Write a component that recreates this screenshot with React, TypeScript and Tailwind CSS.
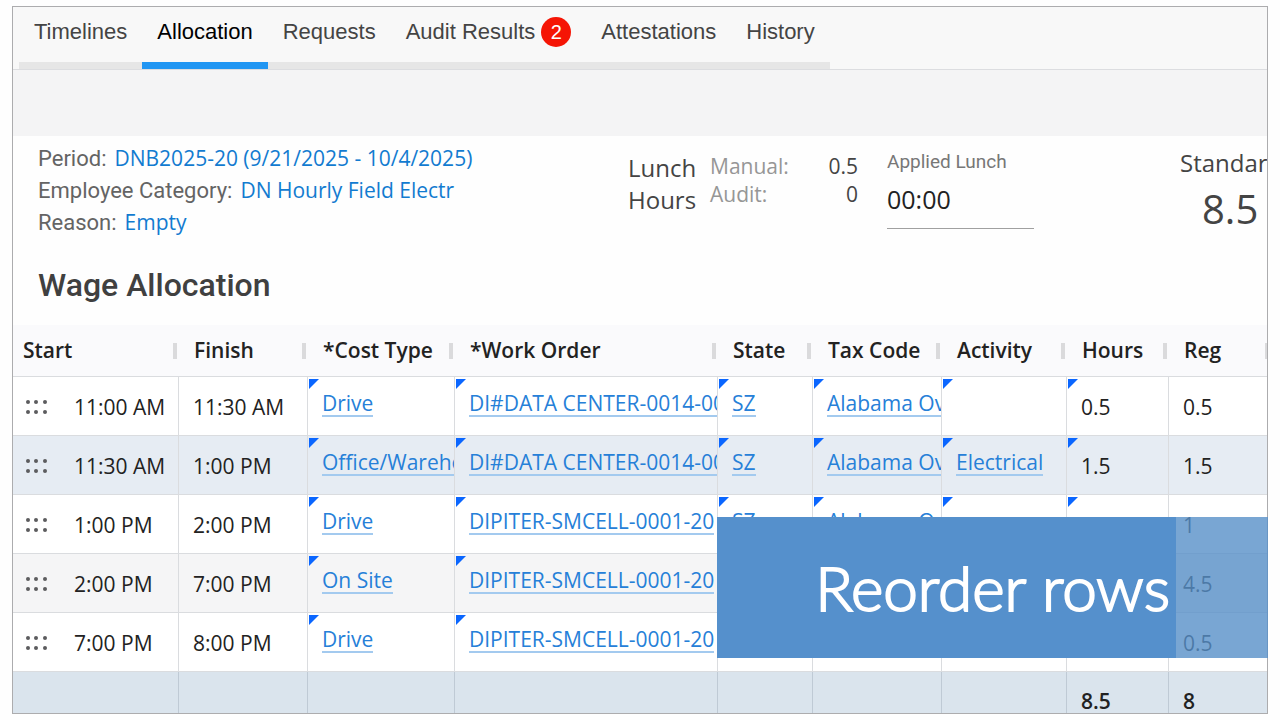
import { ReactNode } from 'react';
import { clsx } from 'clsx';

type Row = {
  start: string,
  finish: string,
  costType: string,
  workOrder: string,
  state: string,
  taxCode: string,
  activity: string,
  hours: string,
  reg: string,
  bg: string
}

const tabs = [
  { name: 'Timelines' },
  { name: 'Allocation', active: true },
  { name: 'Requests' },
  { name: 'Audit Results', count: 2 },
  { name: 'Attestations' },
  { name: 'History' },
];

const columns = [
  { name: 'Start', width: 'w-[166px]' },
  { name: 'Finish', width: 'w-[129px]' },
  { name: '*Cost Type', width: 'w-[147px]' },
  { name: '*Work Order', width: 'w-[263px]' },
  { name: 'State', width: 'w-[95px]' },
  { name: 'Tax Code', width: 'w-[129px]' },
  { name: 'Activity', width: 'w-[125px]' },
  { name: 'Hours', width: 'w-[102px]' },
  { name: 'Reg', width: '' },
];

const rows: Row[] = [
  { start: '11:00 AM', finish: '11:30 AM', costType: 'Drive', workOrder: 'DI#DATA CENTER-0014-001', state: 'SZ', taxCode: 'Alabama Overtime', activity: '', hours: '0.5', reg: '0.5', bg: 'bg-white' },
  { start: '11:30 AM', finish: '1:00 PM', costType: 'Office/Warehouse', workOrder: 'DI#DATA CENTER-0014-001', state: 'SZ', taxCode: 'Alabama Overtime', activity: 'Electrical', hours: '1.5', reg: '1.5', bg: 'bg-[#e6ecf3]' },
  { start: '1:00 PM', finish: '2:00 PM', costType: 'Drive', workOrder: 'DIPITER-SMCELL-0001-20', state: 'SZ', taxCode: 'Alabama Overtime', activity: '', hours: '1', reg: '1', bg: 'bg-white' },
  { start: '2:00 PM', finish: '7:00 PM', costType: 'On Site', workOrder: 'DIPITER-SMCELL-0001-20', state: 'SZ', taxCode: 'Alabama Overtime', activity: '', hours: '5', reg: '4.5', bg: 'bg-[#f5f5f6]' },
  { start: '7:00 PM', finish: '8:00 PM', costType: 'Drive', workOrder: 'DIPITER-SMCELL-0001-20', state: 'SZ', taxCode: 'Alabama Overtime', activity: '', hours: '0.5', reg: '0.5', bg: 'bg-white' },
];

const DragHandle = () => (
  <svg width="24" height="16" viewBox="0 0 24 16" fill="#5c5c5e" aria-hidden="true">
    {[5, 13, 22].map((x) => [2, 12].map((y) => <circle key={`${x}-${y}`} cx={x} cy={y} r="2" />))}
  </svg>
);

const Cell = ({ children, editable = false, className = 'pt-[3px]' }: { children?: ReactNode, editable?: boolean, className?: string }) => (
  <td className={clsx('relative h-[59px] overflow-hidden whitespace-nowrap border-b border-r border-[#dadcdf] pl-3.5', className)}>
    {editable && (
      <span className="absolute left-px top-0.5 size-2.5 bg-[#0a66ff] [clip-path:polygon(0_0,100%_0,0_100%)]" />
    )}
    {children}
  </td>
);

const LinkCell = ({ text }: { text: string }) => (
  <Cell editable className="">
    {text && (
      <a href="#" className="mb-2 inline-block border-b-2 border-[#a3caef] leading-6 text-[#2680d8]">{text}</a>
    )}
  </Cell>
);

const Tabs = () => (
  <nav className="flex border-b border-[#dcdde0] bg-[#f8f8f8] pl-1.5 font-['Liberation_Sans',sans-serif] text-[22px]">
    {tabs.map((tab) => (
      <button
        key={tab.name}
        className={clsx(
          'flex h-[62px] items-center gap-1.5 border-b-[7px] px-[15px] pb-1.5',
          tab.active ? 'border-[#2196f3] text-black' : 'border-[#e6e6e6] text-[#444]'
        )}
      >
        {tab.name}
        {tab.count && (
          <span className="flex size-[30px] items-center justify-center rounded-full bg-[#f51505] text-xl text-white">{tab.count}</span>
        )}
      </button>
    ))}
  </nav>
);

const Detail = ({ label, value }: { label: string, value: string }) => (
  <div className="flex h-8 items-baseline gap-2">
    <span className="font-[Roboto,sans-serif] text-[22px] text-[#646464]">{label}</span>
    <a href="#" className="text-[#127bd0]">{value}</a>
  </div>
);

const Summary = () => (
  <section className="flex overflow-hidden pl-[25px] pt-1.5">
    <div className="w-[590px] shrink-0">
      <Detail label="Period:" value="DNB2025-20 (9/21/2025 - 10/4/2025)" />
      <Detail label="Employee Category:" value="DN Hourly Field Electr" />
      <Detail label="Reason:" value="Empty" />
    </div>
    <div className="w-[82px] shrink-0 pt-2.5 text-2xl leading-8 text-[#444]">Lunch Hours</div>
    <dl className="grid w-[148px] shrink-0 grid-cols-2 content-start pt-2.5 leading-7">
      <dt className="text-[#969696]">Manual:</dt>
      <dd className="text-right text-[#444]">0.5</dd>
      <dt className="text-[#969696]">Audit:</dt>
      <dd className="text-right text-[#444]">0</dd>
    </dl>
    <div className="ml-[29px] w-[147px] shrink-0 pt-1.5">
      <label htmlFor="lunch" className="block font-[Roboto,sans-serif] text-[19px] leading-7 text-[#777]">Applied Lunch</label>
      <input id="lunch" defaultValue="00:00" className="h-[53px] w-full border-b border-[#a0a0a0] pb-1.5 text-[25px] text-[#222]" />
    </div>
    <div className="ml-[146px] shrink-0 pt-[5px] text-[#444]">
      <div className="text-2xl leading-8">Standard</div>
      <div className="pl-[22px] text-[40px] leading-[60px]">8.5</div>
    </div>
  </section>
);

const App = () => {
  return (
    <div className="bg-[#fefefe] px-3 py-1.5 font-['Open_Sans',sans-serif] text-[21px] text-[#222]">
      <div className="relative">
        <main className="overflow-hidden border border-[#acacae]">
          <Tabs />
          <div className="h-[66px] bg-[#f4f4f5]" />
          <Summary />
          <h1 className="pb-5 pl-[25px] pt-[26px] font-[Roboto,sans-serif] text-[32px] font-medium leading-10 text-[#404040]">
            Wage Allocation
          </h1>

          {/* the last column runs a little past the frame */}
          <table className="w-[calc(100%+4px)] table-fixed border-separate border-spacing-0 text-left">
            <thead className="bg-[#fafafc]">
              <tr>
                {columns.map((col, i) => (
                  <th
                    key={col.name}
                    className={clsx('h-[52px] whitespace-nowrap border-b border-[#dadcdf] p-0 font-semibold', col.width)}
                  >
                    <div className={clsx('flex items-center justify-between pr-0.5', i === 0 ? 'pl-2.5' : 'pl-[15px]')}>
                      {col.name}
                      <span className="h-4 w-1 bg-[#dadadc]" />
                    </div>
                  </th>
                ))}
              </tr>
            </thead>
            <tbody>
              {rows.map((row) => (
                <tr key={row.start} className={row.bg}>
                  <Cell>
                    <div className="-ml-1 flex items-center gap-[27px]">
                      <DragHandle />
                      {row.start}
                    </div>
                  </Cell>
                  <Cell>{row.finish}</Cell>
                  <LinkCell text={row.costType} />
                  <LinkCell text={row.workOrder} />
                  <LinkCell text={row.state} />
                  <LinkCell text={row.taxCode} />
                  <LinkCell text={row.activity} />
                  <Cell editable>{row.hours}</Cell>
                  <Cell>{row.reg}</Cell>
                </tr>
              ))}
            </tbody>
            <tfoot className="bg-[#dae4ed]">
              <tr>
                {['', '', '', '', '', '', '', '8.5', '8'].map((total, i) => (
                  <td key={i} className="h-[41px] border-r border-[#bfcad5] pb-0 pl-3.5 align-bottom font-semibold leading-6">
                    {total}
                  </td>
                ))}
              </tr>
            </tfoot>
          </table>
        </main>

        {/* caption banner over the grid */}
        <div className="absolute bottom-[56px] right-0 flex h-[141px] w-[551px] bg-[#5790c8]/80">
          <div className="flex w-[459px] items-center justify-end whitespace-nowrap bg-[#5590cc] pr-1.5 font-[Lato,sans-serif] text-[62px] font-light text-white [-webkit-text-stroke:2px_white]">
            Reorder rows
          </div>
        </div>
      </div>
    </div>
  );
};

export default App;
